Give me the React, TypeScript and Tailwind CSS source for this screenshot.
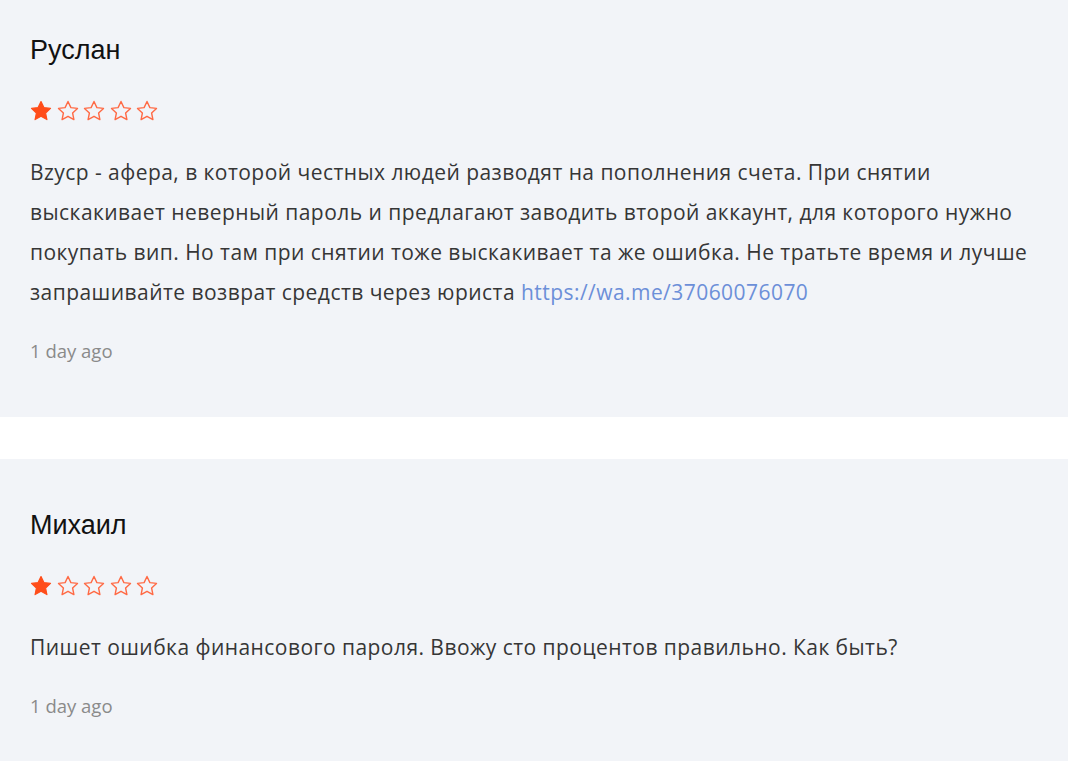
import React from "react";

const STAR = "M12 2.5l2.9 6.1 6.6.8-4.9 4.6 1.3 6.6L12 17.3 6.1 20.6l1.3-6.6L2.5 9.4l6.6-.8z";

function Stars({ n }: { n: number }) {
  return (
    <div className="flex items-center gap-[2.5px] h-[24px] -ml-[1px]">
      {[0, 1, 2, 3, 4].map((i) => (
        <svg key={i} width="24" height="24" viewBox="0 0 24 24">
          {i < n ? (
            <path d={STAR} fill="#ff4d1a" stroke="#ff4d1a" strokeWidth="1.2" strokeLinejoin="round" />
          ) : (
            <path d={STAR} fill="none" stroke="#ff6a45" strokeWidth="1.4" strokeLinejoin="round" />
          )}
        </svg>
      ))}
    </div>
  );
}

function Review({ name, children }: { name: string; children: React.ReactNode }) {
  return (
    <div className="bg-[#f2f4f8] pl-[30px] pr-[30px] pt-[50px] pb-[54px]">
      <div className="text-[27px] leading-[32px] text-[#111] [font-family:'Liberation_Sans',Arial,sans-serif]">
        {name}
      </div>
      <div className="mt-[33px]">
        <Stars n={1} />
      </div>
      <div className="mt-[29px] text-[21px] leading-[40px] tracking-[0.45px] text-[#363636] [font-family:'Open_Sans',sans-serif]">
        {children}
      </div>
      <div className="mt-[27px] text-[18.5px] leading-[24px] text-[#8a8a8a] [font-family:'Open_Sans',sans-serif]">
        1 day ago
      </div>
    </div>
  );
}

export default function App() {
  return (
    <div className="w-[1068px] h-[761px] overflow-hidden bg-white">
      <div className="-mt-[16px] flex flex-col gap-[42px]">
        <Review name="Руслан">
          Bzycp - афера, в которой честных людей разводят на пополнения счета. При снятии выскакивает неверный пароль и
          предлагают заводить второй аккаунт, для которого нужно покупать вип. Но там при снятии тоже выскакивает та же
          ошибка. Не тратьте время и лучше запрашивайте возврат средств через юриста{" "}
          <span className="text-[#6c8fd8]">https://wa.me/37060076070</span>
        </Review>
        <Review name="Михаил">
          Пишет ошибка финансового пароля. Ввожу сто процентов правильно. Как быть?
        </Review>
      </div>
    </div>
  );
}
